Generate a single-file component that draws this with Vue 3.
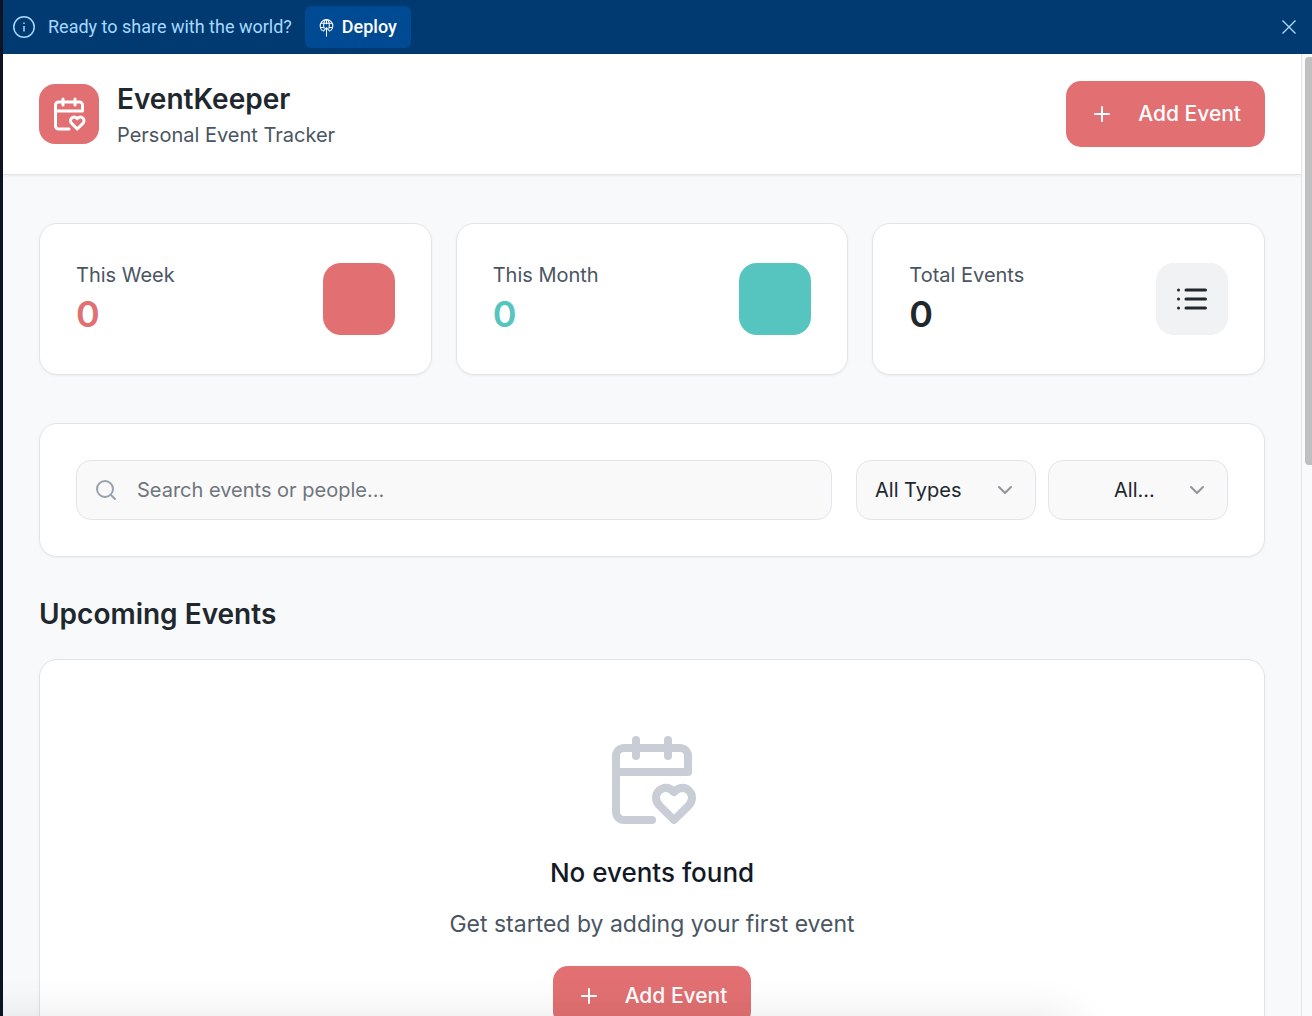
<script setup>
import { ref } from 'vue'

const query = ref('')
const type = ref('all')
const month = ref('all')
const bannerOpen = ref(true)

const stats = [
  { label: 'This Week', value: 0, tone: 'coral' },
  { label: 'This Month', value: 0, tone: 'teal' },
  { label: 'Total Events', value: 0, tone: 'plain' }
]
</script>

<template>
  <div class="shell">
    <aside v-if="bannerOpen" class="banner">
      <svg class="info" viewBox="0 0 24 24" aria-hidden="true">
        <circle cx="12" cy="12" r="10.2" />
        <path d="M12 11v5.4" />
        <path d="M12 7.4v1.6" />
      </svg>
      <span class="banner-text">Ready to share with the world?</span>
      <button class="deploy" type="button">
        <svg viewBox="0 0 14 18" aria-hidden="true">
          <path d="M3.2 12.1A6 6 0 1 1 10.8 12.1" />
          <path d="M4.9 10.2C3.6 6.5 4.6 1.4 7 1.4s3.4 5.1 2.1 8.8" />
          <path d="M1.6 5h10.8M1.200 9h3.300M9.500 9h3.300M7 1.400V6" />
          <path d="M7 17.500V9.500M3.800 12.600L7 9.200l3.200 3.400" />
        </svg>
        Deploy
      </button>
      <button class="dismiss" type="button" aria-label="Dismiss" @click="bannerOpen = false">
        <svg viewBox="0 0 14 14" aria-hidden="true"><path d="M.5.5l13 13M13.500.5l-13 13" /></svg>
      </button>
    </aside>

    <div class="viewport">
      <div class="page">
        <header class="topbar">
          <div class="logo">
            <svg class="icon" viewBox="0 0 24 24" aria-hidden="true">
              <path d="M3 10h18V6a2 2 0 0 0-2-2H5a2 2 0 0 0-2 2v14c0 1.100.9 2 2 2h7" />
              <path d="M8 2v4M16 2v4" />
              <path d="M21.290 14.700a2.430 2.430 0 0 0-2.650-.52c-.3.120-.57.3-.8.530l-.34.340-.35-.34a2.430 2.430 0 0 0-2.650-.53c-.3.120-.56.3-.79.530-.95.940-1 2.530.2 3.740L17.500 22l3.600-3.550c1.200-1.210 1.140-2.800.190-3.740Z" />
            </svg>
          </div>
          <div class="brand">
            <h1>EventKeeper</h1>
            <p>Personal Event Tracker</p>
          </div>
          <button class="add" type="button">
            <svg class="icon" viewBox="0 0 24 24" aria-hidden="true"><path d="M5 12h14M12 5v14" /></svg>
            Add Event
          </button>
        </header>

        <main>
          <section class="stats" aria-label="Statistics">
            <article v-for="s in stats" :key="s.label" class="card stat" :class="s.tone">
              <div>
                <p class="label">{{ s.label }}</p>
                <p class="value">{{ s.value }}</p>
              </div>
              <div class="tile">
                <svg v-if="s.tone === 'plain'" class="icon" viewBox="0 0 24 24" aria-hidden="true">
                  <path d="M3 6h.01M3 12h.01M3 18h.01M8 6h13M8 12h13M8 18h13" />
                </svg>
              </div>
            </article>
          </section>

          <section class="card filters" aria-label="Filters">
            <label class="search">
              <svg class="icon" viewBox="0 0 24 24" aria-hidden="true">
                <circle cx="11" cy="11" r="8" />
                <path d="M21 21l-4.300-4.300" />
              </svg>
              <input v-model="query" type="text" aria-label="Search" placeholder="Search events or people..." />
            </label>
            <div class="selects">
              <label class="select">
                <select v-model="type" aria-label="Event type">
                  <option value="all">All Types</option>
                </select>
                <svg class="icon" viewBox="0 0 24 24" aria-hidden="true"><path d="M6 9l6 6 6-6" /></svg>
              </label>
              <label class="select inset">
                <select v-model="month" aria-label="Month">
                  <option value="all">All...</option>
                </select>
                <svg class="icon" viewBox="0 0 24 24" aria-hidden="true"><path d="M6 9l6 6 6-6" /></svg>
              </label>
            </div>
          </section>

          <h2>Upcoming Events</h2>

          <section class="card empty">
            <svg class="icon" viewBox="0 0 24 24" aria-hidden="true">
              <path d="M3 10h18V6a2 2 0 0 0-2-2H5a2 2 0 0 0-2 2v14c0 1.100.9 2 2 2h7" />
              <path d="M8 2v4M16 2v4" />
              <path d="M21.290 14.700a2.430 2.430 0 0 0-2.650-.52c-.3.120-.57.3-.8.530l-.34.340-.35-.34a2.430 2.430 0 0 0-2.650-.53c-.3.120-.56.3-.79.530-.95.940-1 2.530.2 3.740L17.500 22l3.600-3.550c1.200-1.210 1.140-2.800.190-3.740Z" />
            </svg>
            <h3>No events found</h3>
            <p>Get started by adding your first event</p>
            <button class="add" type="button">
              <svg class="icon" viewBox="0 0 24 24" aria-hidden="true"><path d="M5 12h14M12 5v14" /></svg>
              Add Event
            </button>
          </section>
        </main>
      </div>
      <div class="track" aria-hidden="true"><div class="thumb"></div></div>
    </div>
    <div class="dock-shadow" aria-hidden="true"></div>
  </div>
</template>

<style>
body {
  margin: 0;
}
</style>

<style scoped>
* {
  box-sizing: border-box;
}

h1, h2, h3, p {
  margin: 0;
}

button, input, select {
  font: inherit;
  color: inherit;
}

button {
  border: 0;
  cursor: pointer;
}

svg {
  display: block;
  flex: none;
  fill: none;
  stroke: currentColor;
}

.icon {
  stroke-width: 2;
  stroke-linecap: round;
  stroke-linejoin: round;
}

.shell {
  position: relative;
  display: flex;
  flex-direction: column;
  height: 100vh;
  overflow: hidden;
  border-left: 3px solid #0e1323;
  background: #f8f9fb;
  color: #20272d;
  font-family: Inter, "Liberation Sans", sans-serif;
  font-size: 20px;
  line-height: 30px;
}

.banner {
  display: flex;
  flex: none;
  align-items: center;
  height: 54px;
  padding: 0 16px 0 9px;
  background: #003a70;
  color: #a8d8ff;
  font-family: Roboto, "Liberation Sans", sans-serif;
  font-size: 18px;
  line-height: 24px;
}

.info {
  width: 24px;
  height: 24px;
  stroke-width: 1.5;
}

.banner-text {
  margin: 0 13px 0 12px;
}

.deploy {
  display: flex;
  align-items: center;
  gap: 8px;
  height: 42px;
  padding: 0 14px;
  border-radius: 6px;
  background: #004a94;
  color: #fff;
  font-weight: 500;
}

.deploy svg {
  width: 15px;
  height: 19px;
}

.dismiss {
  margin-left: auto;
  padding: 0;
  background: none;
}

.dismiss svg {
  width: 14px;
  height: 14px;
  stroke-width: 1.4;
}

.viewport {
  display: flex;
  flex: 1;
  min-height: 0;
}

.page {
  flex: 1;
  min-width: 0;
  overflow-y: auto;
  scrollbar-width: none;
}

.track {
  flex: none;
  width: 11px;
  padding: 3px 0 0 3px;
  border-left: 1px solid #e4e4e6;
  background: #fafafa;
}

.thumb {
  height: 42.5%;
  border-radius: 4px 0 0 4px;
  background: #c0c0c0;
}

.topbar {
  position: relative;
  display: flex;
  align-items: center;
  padding: 24px 36px;
  background: #fff;
  border-bottom: 1px solid #e1e4e9;
  box-shadow: 0 1px 3px rgba(0, 0, 0, 0.06);
}

.logo {
  display: grid;
  place-items: center;
  width: 60px;
  height: 60px;
  margin-right: 18px;
  border-radius: 16px;
  background: #e27072;
  color: #fff;
}

.logo .icon {
  width: 36px;
  height: 36px;
}

.brand {
  color: #4a5563;
}

h1, h2 {
  color: #20272d;
  font-size: 28px;
  font-weight: 600;
  line-height: 42px;
}

.add {
  display: flex;
  align-items: center;
  gap: 24px;
  height: 66px;
  padding: 0 24px;
  border-radius: 15px;
  background: #e27072;
  color: #fff;
  font-size: 21px;
  font-weight: 500;
}

.add .icon {
  width: 24px;
  height: 24px;
}

.topbar .add {
  margin-left: auto;
}

main {
  padding: 48px 36px;
}

.card {
  border: 1px solid #e1e4e9;
  border-radius: 18px;
  background: #fff;
  box-shadow: 0 1px 3px rgba(0, 0, 0, 0.05);
}

.stats {
  display: grid;
  grid-template-columns: repeat(3, 1fr);
  gap: 24px;
}

.stat {
  display: flex;
  align-items: center;
  justify-content: space-between;
  padding: 36px;
}

.label {
  color: #4a5563;
}

.value {
  font-size: 36px;
  font-weight: 600;
  line-height: 48px;
}

.tile {
  display: grid;
  place-items: center;
  width: 72px;
  height: 72px;
  border-radius: 18px;
  background: #f1f2f4;
}

.tile .icon {
  width: 36px;
  height: 36px;
}

.coral .value {
  color: #e27072;
}

.coral .tile {
  background: #e27072;
}

.teal .value {
  color: #56c4bf;
}

.teal .tile {
  background: #56c4bf;
}

.filters {
  display: flex;
  gap: 24px;
  margin: 48px 0 36px;
  padding: 36px;
}

.search {
  position: relative;
  flex: 1;
}

.search .icon {
  position: absolute;
  top: 18px;
  left: 18px;
  width: 24px;
  height: 24px;
  color: #98a2af;
}

input, select {
  display: block;
  width: 100%;
  height: 60px;
  border: 1px solid #e1e4e9;
  border-radius: 15px;
  background: #f9f9f9;
}

input {
  padding: 0 18px 0 60px;
}

input::placeholder {
  color: #6f757c;
  opacity: 1;
}

.selects {
  display: flex;
  gap: 12px;
}

.select {
  position: relative;
  width: 180px;
}

.select .icon {
  position: absolute;
  top: 18px;
  right: 19px;
  width: 24px;
  height: 24px;
  color: #929598;
  pointer-events: none;
}

select {
  padding: 0 48px 0 18px;
  appearance: none;
}

.inset select {
  padding-left: 65px;
}

.empty {
  display: flex;
  flex-direction: column;
  align-items: center;
  margin-top: 24px;
  padding: 72px 36px;
}

.empty > .icon {
  width: 96px;
  height: 96px;
  color: #c9ced6;
}

h3 {
  margin: 24px 0 12px;
  color: #131a26;
  font-size: 26px;
  font-weight: 500;
  line-height: 42px;
}

.empty p {
  margin-bottom: 24px;
  color: #4a5563;
  font-size: 23px;
  line-height: 36px;
}

.empty .add {
  height: 60px;
}

/* soft shade rising from the bottom edge */
.dock-shadow {
  position: absolute;
  right: 18%;
  bottom: -40px;
  left: -40px;
  height: 30px;
  border-radius: 15px;
  box-shadow: 0 0 50px rgba(0, 0, 0, 0.16);
  pointer-events: none;
}
</style>
